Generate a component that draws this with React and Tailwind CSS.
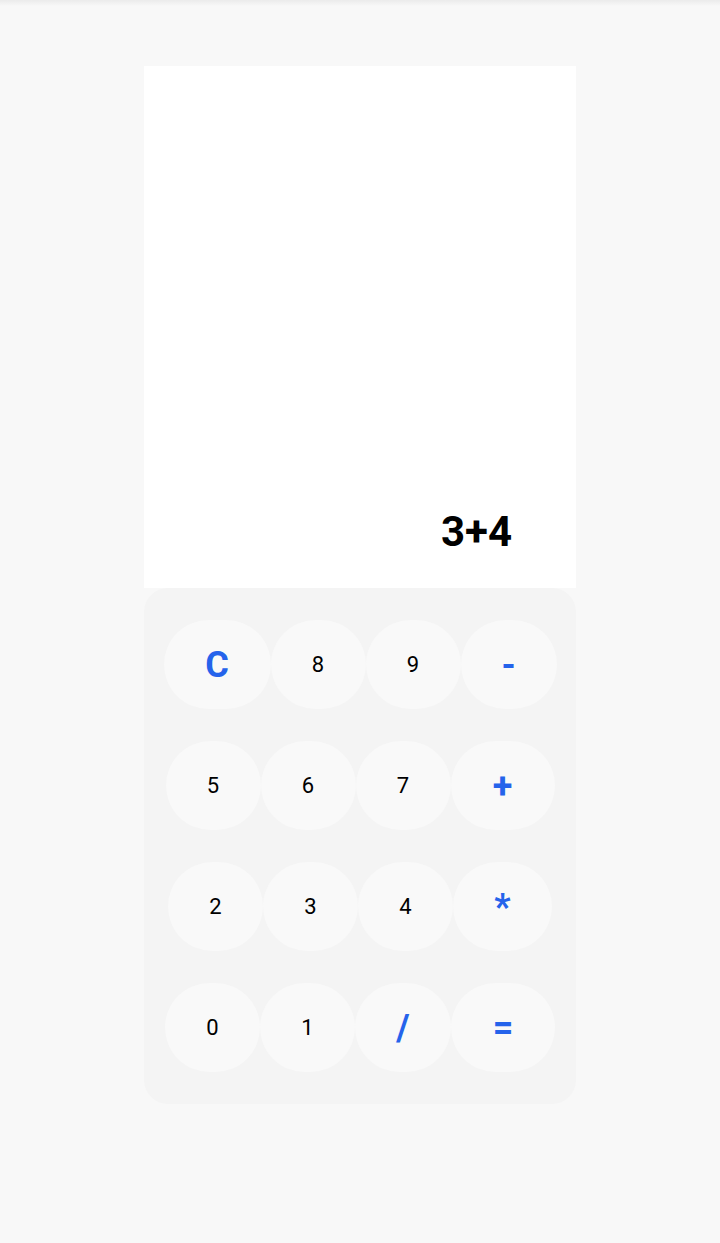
import React from 'react';

const rows = [
    [
        { label: 'C', op: true, w: 'w-[107px]' },
        { label: '8', w: 'w-[95px]' },
        { label: '9', w: 'w-[95px]' },
        { label: '-', op: true, w: 'w-[96px]' },
    ],
    [
        { label: '5', w: 'w-[95px]' },
        { label: '6', w: 'w-[95px]' },
        { label: '7', w: 'w-[95px]' },
        { label: '+', op: true, w: 'w-[104px]' },
    ],
    [
        { label: '2', w: 'w-[95px]' },
        { label: '3', w: 'w-[95px]' },
        { label: '4', w: 'w-[95px]' },
        { label: '*', op: true, w: 'w-[99px]' },
    ],
    [
        { label: '0', w: 'w-[95px]' },
        { label: '1', w: 'w-[95px]' },
        { label: '/', op: true, w: 'w-[96px]' },
        { label: '=', op: true, w: 'w-[104px]' },
    ],
];

const Key = ({ label, op, w }) => (
    <button
        className={`${w} h-[89px] shrink-0 rounded-full bg-[#f9f9f9] flex items-center justify-center ${
            op ? 'text-[36px] font-bold text-[#2563eb]' : 'text-[22px] text-black'
        }`}
    >
        {label}
    </button>
);

export default function App() {
    return (
        <div className="min-h-[1243px] bg-[#f8f8f8] font-['Roboto',sans-serif]">
            {/* top shadow */}
            <div className="h-[6px] bg-gradient-to-b from-[#ebebeb] to-[#f8f8f8]" />

            <div className="mx-auto w-[432px] mt-[60px]">
                {/* Display */}
                <div className="h-[522px] bg-white flex items-end justify-end pr-16 pb-[33px]">
                    <span className="text-[42px] font-bold text-black leading-none pb-[2px]">3+4</span>
                </div>

                {/* Keypad */}
                <div className="bg-[#f4f4f4] rounded-3xl py-8 flex flex-col gap-8">
                    {rows.map((row, i) => (
                        <div key={i} className="flex justify-center">
                            {row.map((k) => (
                                <Key key={k.label} {...k} />
                            ))}
                        </div>
                    ))}
                </div>
            </div>
        </div>
    );
}
